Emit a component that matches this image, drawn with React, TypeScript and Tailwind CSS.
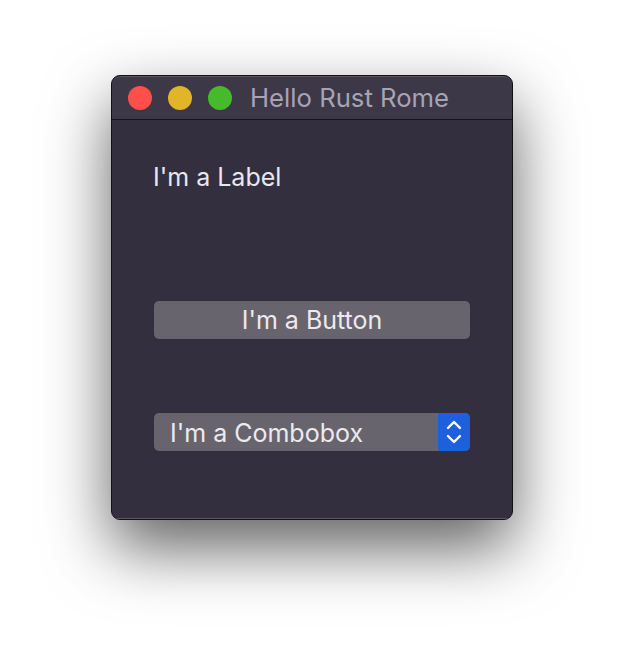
import React from "react";

export default function App() {
  return (
    <div className="w-[624px] h-[668px] bg-white pt-[75px] pl-[111px]" style={{ fontFamily: "Inter, 'Noto Sans', sans-serif" }}>
      <div className="w-[402px] h-[445px] rounded-[9px] bg-[#332f3e] border border-[#111015] shadow-[0_28px_65px_rgba(0,0,0,0.62)] flex flex-col overflow-hidden">
        <div className="h-[43px] bg-[#3c3848] border-t border-[#5a5666] rounded-t-[9px] flex items-center pl-[16px] shrink-0">
          <div className="w-[24px] h-[24px] rounded-full bg-[#fe4f4a]" />
          <div className="w-[24px] h-[24px] rounded-full bg-[#e2b427] ml-[16px]" />
          <div className="w-[24px] h-[24px] rounded-full bg-[#45bb2c] ml-[16px]" />
          <div className="ml-[18px] text-[25.7px] leading-none text-[#a8a3b3]">Hello Rust Rome</div>
        </div>
        <div className="h-px bg-[#16141b] shrink-0" />
        <div className="flex-1 flex flex-col pl-[41px] pr-[42px] border-b border-[#5c5868]">
          <div className="mt-[42px] text-[25px] leading-[30px] text-[#e9e7ed]">I'm a Label</div>
          <div className="mt-[109px] ml-[1px] h-[38px] pt-[2px] rounded-[5px] bg-[#67646d] flex items-center justify-center text-[25px] text-[#eceaef]">
            I'm a Button
          </div>
          <div className="mt-[74px] ml-[1px] h-[38px] rounded-[5px] bg-[#67646d] flex items-center overflow-hidden">
            <div className="flex-1 pl-[16px] pt-[3px] text-[25px] text-[#eceaef]">I'm a Combobox</div>
            <div className="w-[32px] h-full bg-[#1e5fdd] flex items-center justify-center">
              <svg width="18" height="28" viewBox="0 0 18 28" fill="none" stroke="#ffffff" strokeWidth="2.4" strokeLinecap="round" strokeLinejoin="round">
                <path d="M3 10 L9 4 L15 10" />
                <path d="M3 18 L9 24 L15 18" />
              </svg>
            </div>
          </div>
        </div>
      </div>
    </div>
  );
}
